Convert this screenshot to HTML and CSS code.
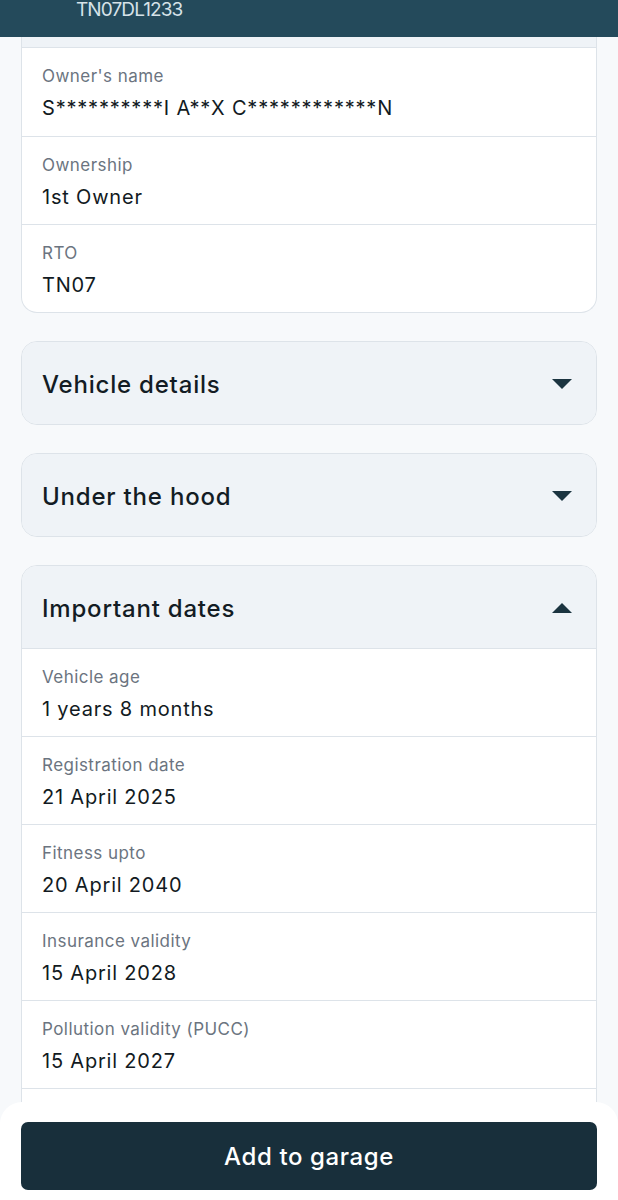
FILE: index.html
```html
<!DOCTYPE html>
<html lang="en">
<head>
<meta charset="utf-8">
<title>Vehicle</title>
<link rel="stylesheet" href="styles.css">
</head>
<body>
<header class="topbar"><span class="plate">TN07DL1233</span></header>
<main class="content">
  <section class="card">
    <div class="card-cap"></div>
    <div class="row"><div class="label">Owner's name</div><div class="value">S**********I A**X C************N</div></div>
    <div class="row"><div class="label">Ownership</div><div class="value">1st Owner</div></div>
    <div class="row"><div class="label">RTO</div><div class="value">TN07</div></div>
  </section>

  <section class="card">
    <div class="acc-head"><span class="acc-title">Vehicle details</span><span class="tri down"></span></div>
  </section>

  <section class="card">
    <div class="acc-head"><span class="acc-title">Under the hood</span><span class="tri down"></span></div>
  </section>

  <section class="card">
    <div class="acc-head open"><span class="acc-title">Important dates</span><span class="tri up"></span></div>
    <div class="row"><div class="label">Vehicle age</div><div class="value">1 years 8 months</div></div>
    <div class="row"><div class="label">Registration date</div><div class="value">21 April 2025</div></div>
    <div class="row"><div class="label">Fitness upto</div><div class="value">20 April 2040</div></div>
    <div class="row"><div class="label">Insurance validity</div><div class="value">15 April 2028</div></div>
    <div class="row"><div class="label">Pollution validity (PUCC)</div><div class="value">15 April 2027</div></div>
    <div class="row"><div class="label">Tax upto</div><div class="value">Lifetime</div></div>
  </section>
</main>
<footer class="bottom">
  <button class="cta">Add to garage</button>
</footer>
</body>
</html>
```

FILE: styles.css
```css
* { box-sizing: border-box; }
html, body { margin: 0; padding: 0; }
body {
  background: #f7f9fb;
  font-family: Inter, "Open Sans", "Liberation Sans", sans-serif;
  color: #111827;
  height: 1200px;
  overflow: hidden;
}
.topbar {
  height: 37px;
  background: #244a5b;
  padding-left: 76px;
  display: flex;
  align-items: flex-start;
}
.plate {
  color: #d6e2e8;
  font-size: 19px;
  line-height: 20px;
  margin-top: 0;
  letter-spacing: -0.9px;
}
.content {
  padding: 0 21px;
  display: flex;
  flex-direction: column;
  gap: 28px;
}
.card {
  background: #fff;
  border: 1px solid #dde3e9;
  border-radius: 16px;
  overflow: hidden;
}
.content > .card:first-child {
  border-top: none;
  border-top-left-radius: 0;
  border-top-right-radius: 0;
}
.card-cap {
  height: 11px;
  background: #eff3f7;
  border-bottom: 1px solid #dde3e9;
}
.row {
  height: 88px;
  padding: 16px 20px 0;
  border-top: 1px solid #dde3e9;
}
.card-cap + .row { border-top: none; }
.label {
  font-size: 17px;
  line-height: 24px;
  color: #6b7480;
  letter-spacing: 0.45px;
}
.value {
  font-size: 20px;
  line-height: 30px;
  margin-top: 5px;
  color: #121a22;
  letter-spacing: 0.8px;
}
.acc-head {
  height: 82px;
  background: #eff3f7;
  display: flex;
  align-items: center;
  justify-content: space-between;
  padding: 2px 24px 0 20px;
}
.acc-title {
  font-size: 24px;
  font-weight: 500;
  color: #131c24;
  letter-spacing: 0.8px;
}
.tri {
  width: 0; height: 0;
  border-left: 10px solid transparent;
  border-right: 10px solid transparent;
}
.tri.down { border-top: 10px solid #1b3440; }
.tri.up { border-bottom: 10px solid #1b3440; }
.bottom {
  position: fixed;
  left: 0; right: 0; bottom: 0;
  height: 98px;
  background: #fff;
  border-top-left-radius: 22px;
  border-top-right-radius: 22px;
  padding: 20px 21px 0;
}
.cta {
  display: block;
  width: 100%;
  height: 68px;
  border: none;
  border-radius: 7px;
  background: #182f3b;
  color: #fff;
  font-family: Inter, "Open Sans", "Liberation Sans", sans-serif;
  font-size: 24px;
  font-weight: 500;
  letter-spacing: 0.6px;
  padding-top: 2px;
}
```
